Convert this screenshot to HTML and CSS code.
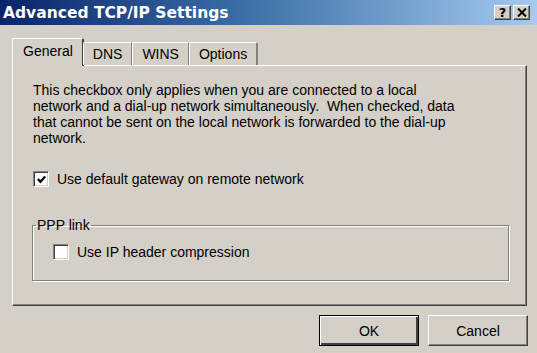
FILE: index.html
```html
<!DOCTYPE html>
<html>
<head>
<meta charset="utf-8">
<link rel="stylesheet" href="styles.css">
</head>
<body>
<div class="window">
  <div class="titlebar">
    <span class="title">Advanced TCP/IP Settings</span>
    <div class="caption-buttons">
      <span class="cap-btn help">?</span>
      <span class="cap-btn close">
        <svg width="10" height="9" viewBox="0 0 10 9"><path d="M1 0.5 L9 8.5 M9 0.5 L1 8.5" stroke="#000" stroke-width="2" fill="none"/></svg>
      </span>
    </div>
  </div>
  <div class="body">
    <div class="tabs">
      <span class="tab selected">General</span>
      <span class="tab">DNS</span>
      <span class="tab">WINS</span>
      <span class="tab last">Options</span>
    </div>
    <div class="panel">
      <p class="desc">This checkbox only applies when you are connected to a local<br>network and a dial-up network simultaneously.&nbsp; When checked, data<br>that cannot be sent on the local network is forwarded to the dial-up<br>network.</p>
      <label class="check-row first">
        <span class="checkbox">
          <svg width="9" height="9" viewBox="0 0 9 9"><path d="M0.8 4 L3.4 6.8 L8.2 1.6" stroke="#000" stroke-width="2.2" fill="none"/></svg>
        </span>
        <span class="check-label">Use default gateway on remote network</span>
      </label>
      <fieldset class="group">
        <legend>PPP link</legend>
        <label class="check-row">
          <span class="checkbox"></span>
          <span class="check-label">Use IP header compression</span>
        </label>
      </fieldset>
    </div>
    <div class="footer">
      <button class="btn default">OK</button>
      <button class="btn">Cancel</button>
    </div>
  </div>
</div>
</body>
</html>
```
FILE: styles.css
```css
html, body {
  margin: 0;
  padding: 0;
  background: #d4d0c8;
}
.window {
  width: 537px;
  height: 353px;
  background: #d4d0c8;
  font-family: "Liberation Sans", Arial, sans-serif;
  font-size: 14px;
  color: #000;
  overflow: hidden;
}
.titlebar {
  height: 25px;
  background: linear-gradient(to right, #0a246a 0%, #3a6ea5 45%, #a6caf0 100%);
  display: flex;
  align-items: center;
  justify-content: space-between;
  padding: 0 7px 0 3px;
}
.title {
  color: #fff;
  font-family: "DejaVu Sans", Verdana, sans-serif;
  font-weight: bold;
  font-size: 15.5px;
  letter-spacing: 0;
}
.caption-buttons {
  display: flex;
  gap: 2px;
}
.cap-btn {
  width: 17px;
  height: 15px;
  box-sizing: border-box;
  background: #d4d0c8;
  border-top: 1px solid #fff;
  border-left: 1px solid #fff;
  border-right: 1px solid #404040;
  border-bottom: 1px solid #404040;
  box-shadow: inset -1px -1px 0 #808080;
  display: flex;
  align-items: center;
  justify-content: center;
  font-family: "DejaVu Sans", sans-serif;
  font-weight: bold;
  font-size: 13px;
  line-height: 1;
}
.body {
  padding: 13px 10px 0 12px;
}
.tabs {
  display: flex;
  align-items: flex-end;
  height: 27px;
  position: relative;
  z-index: 1;
}
.tab {
  height: 23px;
  box-sizing: border-box;
  padding: 0 9px;
  display: flex;
  align-items: center;
  border-top: 1px solid #fff;
  border-left: 1px solid #fff;
  border-right: 2px solid #808080;
  border-top-left-radius: 2px;
  border-top-right-radius: 2px;
  margin-left: -1px;
}
.tab.selected {
  height: 28px;
  margin-left: 0;
  margin-right: 0;
  padding: 0 9px 3px 10px;
  margin-bottom: -1px;
  background: #d4d0c8;
  border-right: 2px solid #404040;
}
.panel {
  height: 241px;
  box-sizing: border-box;
  border-top: 1px solid #fff;
  border-left: 1px solid #fff;
  border-right: 1px solid #404040;
  border-bottom: 1px solid #404040;
  box-shadow: inset -1px -1px 0 #808080;
  padding: 16px 19px 0 20px;
}
.desc {
  margin: 0;
  line-height: 16px;
}
.check-row {
  display: flex;
  align-items: center;
  gap: 8px;
}
.check-row.first {
  margin-top: 25px;
}
.checkbox {
  width: 16px;
  height: 16px;
  box-sizing: border-box;
  background: #fff;
  border-top: 1px solid #808080;
  border-left: 1px solid #808080;
  border-right: 1px solid #fff;
  border-bottom: 1px solid #fff;
  box-shadow: inset 1px 1px 0 #404040, inset -1px -1px 0 #d4d0c8;
  display: flex;
  align-items: center;
  justify-content: center;
  flex: none;
}
.group {
  margin: 31px 0 0 -1px;
  height: 63px;
  box-sizing: border-box;
  border: 1px solid #808080;
  box-shadow: 1px 1px 0 #fff, inset 1px 1px 0 #fff;
  padding: 12px 0 0 20px;
  width: 477px;
}
.group legend {
  padding: 0 1px;
  margin-left: -17px;
  line-height: 14px;
}
.footer {
  display: flex;
  justify-content: flex-end;
  gap: 9px;
  padding-top: 9px;
  margin-right: -1px;
}
.btn {
  width: 100px;
  height: 31px;
  font-family: "Liberation Sans", Arial, sans-serif;
  font-size: 14px;
  background: #d4d0c8;
  color: #000;
  border-top: 1px solid #fff;
  border-left: 1px solid #fff;
  border-right: 1px solid #404040;
  border-bottom: 1px solid #404040;
  box-shadow: inset -1px -1px 0 #808080;
  padding: 0;
}
.btn.default {
  border: 1px solid #000;
  box-shadow: inset 1px 1px 0 #fff, inset -2px -2px 0 #404040, inset -1px -1px 0 #808080;
}
```
